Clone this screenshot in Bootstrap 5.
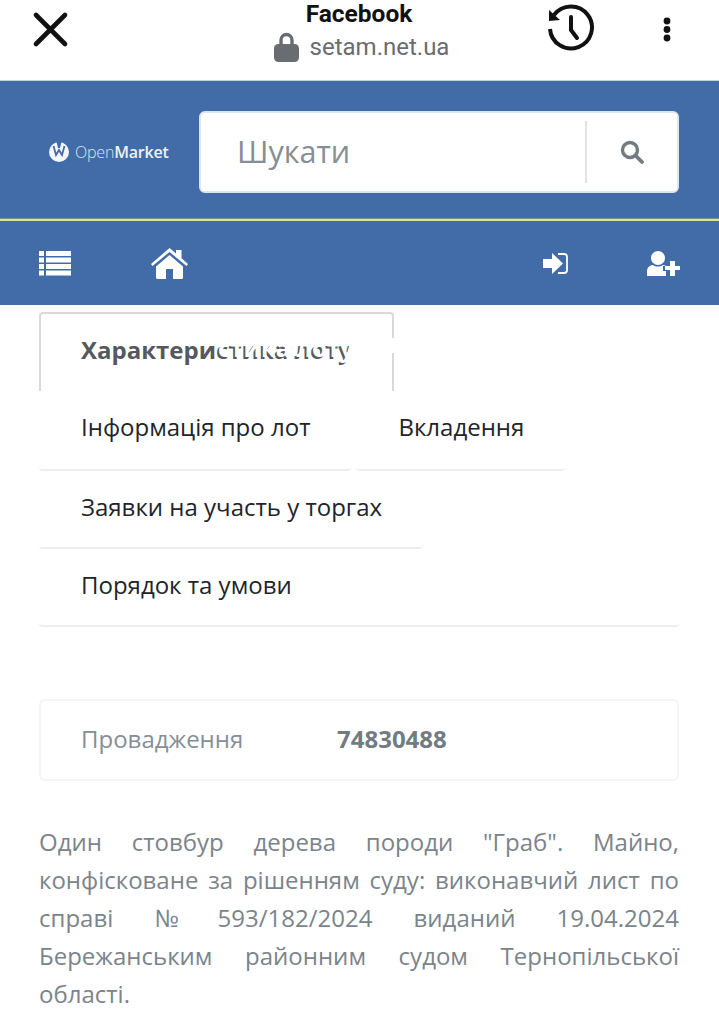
<!DOCTYPE html>
<html lang="uk">
<head>
<meta charset="utf-8">
<title>OpenMarket</title>
<meta name="viewport" content="width=device-width, initial-scale=1">
<link href="https://cdn.jsdelivr.net/npm/bootstrap@5.3.0/dist/css/bootstrap.min.css" rel="stylesheet">
<style>
html,body{height:1027px;overflow:hidden}
body{font-family:"Open Sans","Noto Sans",sans-serif;background:#fff}
.tb{height:81px;border-bottom:1px solid #c6d2e2;position:relative;font-family:Roboto,sans-serif}
.tb-x{position:absolute;left:32px;top:11px}
.tb-h{position:absolute;left:546px;top:4px}
.tb-m{position:absolute;left:660px;top:15px}
.tb-t{position:absolute;left:4px;right:0;top:-1px;text-align:center}
.tb-n{font-size:24.5px;font-weight:700;color:#111;line-height:30px;margin-left:-5px}
.tb-u{font-size:24px;color:#696c70;line-height:32px;margin-top:2px;gap:11px}
.hd{background:#416ca8;height:137px;padding:30px 40px 0 49px}
.lg{color:#dbe4f0;font-size:16px;font-weight:300;letter-spacing:-.2px;width:150px;gap:6px;height:82px}
.lg b{font-weight:600;color:#eef2f8}
.sb{width:480px;height:82px;background:#fff;border:2px solid #dfe5ef;border-radius:6px;padding:8px 0}
.sb-in{font-size:30.5px;color:#868e96;padding-left:36px;border-right:2px solid #e3e3e3}
.sb-b{width:90px}
.ln{height:3px;background:#dfe38f;border-top:1px solid #7d967f}
.nv{background:#416ca8;height:84px;padding:0 39px}
.nv-a{width:112px}
.nv-u{margin-left:79px}
.tbs{margin:7px 40px 0 39px;gap:0 5px;border:0;font-size:24px}
.tbs .tbi{height:78px;line-height:71px;padding:0 41px 0 42px;color:#212529;border-bottom:2px solid #eceeef;border-radius:4px;white-space:nowrap;display:block;text-decoration:none}
.tbs .tbi.up{line-height:68px}
.tbs .tbi.on{color:#55595c;font-weight:700;border:2px solid #d9d9d9;border-bottom:0;border-radius:4px 4px 0 0;padding:0 40px;height:79px;line-height:72px;margin-bottom:2px;position:relative}
.tbs .tbi.on::after{content:"стика лоту";position:absolute;left:177px;top:-2px;color:#fff;font-weight:700}
.tbs .tbi.on::before{content:"";position:absolute;right:-2px;top:24px;width:2px;height:15px;background:#fff}
.fl{width:100%}
.bx{margin:72px 40px 0 39px;height:82px;border:2px solid #f4f5f5;border-radius:6px;padding:0 40px 2px;font-size:24px;color:#868e96}
.bx-l{width:256px}
.bx-v{font-weight:700;color:#727b82}
.ds{margin:42px 40px 0 39px;font-size:24px;line-height:38px;color:#7b848b;text-align:justify}
.nr{display:inline-block;width:22px;vertical-align:bottom;white-space:nowrap}
</style>
</head>
<body>
<div class="tb">
  <svg class="tb-x" width="38" height="38" viewBox="0 0 38 38"><path d="M4 4 33 33M33 4 4 33" stroke="#111" stroke-width="4.6" stroke-linecap="round"/></svg>
  <div class="tb-t">
    <div class="tb-n">Facebook</div>
    <div class="tb-u d-flex justify-content-center align-items-center">
      <svg width="25" height="30" viewBox="0 0 25 30"><path d="M7 14V8a5.500 5.500 0 0 1 11 0v6" fill="none" stroke="#696c70" stroke-width="3.400"/><rect x="0" y="12" width="25" height="18" rx="4.500" fill="#696c70"/></svg>
      <span>setam.net.ua</span>
    </div>
  </div>
  <svg class="tb-h" width="50" height="50" viewBox="0 0 50 50"><path d="M8 11A21 21 0 1 1 4 25" fill="none" stroke="#111" stroke-width="4"/><path d="M3 6 3 17 14 16Z" fill="#111"/><path d="M25 13V26L31 34" fill="none" stroke="#111" stroke-width="4" stroke-linecap="round"/></svg>
  <svg class="tb-m" width="14" height="30" viewBox="0 0 14 30"><circle cx="7" cy="6" r="3.400" fill="#111"/><circle cx="7" cy="14.500" r="3.400" fill="#111"/><circle cx="7" cy="23" r="3.400" fill="#111"/></svg>
</div>
<header class="hd d-flex align-items-start">
  <div class="lg d-flex align-items-center">
    <svg width="20" height="20" viewBox="0 0 20 20"><circle cx="10" cy="10" r="10" fill="#f4f6fa"/><path d="M4.500 4 7 13 10 8 13 13 15.500 4" fill="none" stroke="#416ca8" stroke-width="1.800"/><path d="M7.500 0h5l-1.500 6H9z" fill="#416ca8"/></svg>
    <span>Open<b>Market</b></span>
  </div>
  <div class="sb d-flex align-items-stretch">
    <div class="sb-in flex-grow-1 d-flex align-items-center">Шукати</div>
    <div class="sb-b d-flex align-items-center justify-content-center">
      <svg width="24" height="24" viewBox="0 0 24 24"><circle cx="10" cy="10" r="7.500" fill="none" stroke="#727b82" stroke-width="3.400"/><path d="M15.500 15.500 22 22" stroke="#727b82" stroke-width="3.800" stroke-linecap="round"/></svg>
    </div>
  </div>
</header>
<div class="ln"></div>
<nav class="nv d-flex align-items-center">
  <a class="nv-a" href="#"><svg class="d-block" width="32" height="26" viewBox="0 0 32 26" fill="#fff"><path d="M0 1h5v5H0zM7 1h25v5H7zM0 7.500h5v5H0zM7 7.500h25v5H7zM0 14h5v5H0zM7 14h25v5H7zM0 20.500h5v5H0zM7 20.500h25v5H7z"/></svg></a>
  <a href="#"><svg class="d-block" width="37" height="31" viewBox="0 0 37 31" fill="#fff"><path d="M18.500 0 25 5.500V2h5.500v8.200L37 16l-1.500 2L18.500 4 1.500 18 0 16Z"/><path d="M5 18.500 18.500 7 32 18.500V29.500a1.500 1.500 0 0 1-1.500 1.500H22V21h-7V31H6.500A1.500 1.500 0 0 1 5 29.500Z"/></svg></a>
  <a class="ms-auto" href="#"><svg class="d-block" width="25" height="21" viewBox="0 0 25 21" fill="#fff"><path d="M0 6h9V0l11 10.500L9 21v-6H0Z"/><path d="M15 1h6a3 3 0 0 1 3 3v13a3 3 0 0 1-3 3h-6" fill="none" stroke="#fff" stroke-width="1.800"/></svg></a>
  <a class="nv-u" href="#"><svg class="d-block" width="33" height="25" viewBox="0 0 33 25" fill="#fff"><circle cx="11" cy="7" r="7"/><path d="M0 25v-4c0-5 3-7 6-7 3 2 7 2 10 0 1 0 2 .3 3 1h-3v5h3v5Z"/><path d="M23 10h5v5h5v4h-5v6h-5v-6h-5v-4h5Z"/></svg></a>
</nav>
<ul class="nav tbs">
  <li><a class="tbi on" href="#">Характеристика лоту</a></li>
  <li><a class="tbi up" href="#">Інформація про лот</a></li>
  <li><a class="tbi up" href="#">Вкладення</a></li>
  <li><a class="tbi" href="#">Заявки на участь у торгах</a></li>
  <li class="fl"><a class="tbi" href="#">Порядок та умови</a></li>
</ul>
<div class="bx d-flex align-items-center">
  <div class="bx-l">Провадження</div>
  <div class="bx-v">74830488</div>
</div>
<p class="ds">Один стовбур дерева породи "Граб". Майно, конфісковане за рішенням суду: виконавчий лист по справі <span class="nr">№</span> 593/182/2024 виданий 19.04.2024 Бережанським районним судом Тернопільської області.</p>
<script src="https://cdn.jsdelivr.net/npm/bootstrap@5.3.0/dist/js/bootstrap.bundle.min.js"></script>
</body>
</html>
